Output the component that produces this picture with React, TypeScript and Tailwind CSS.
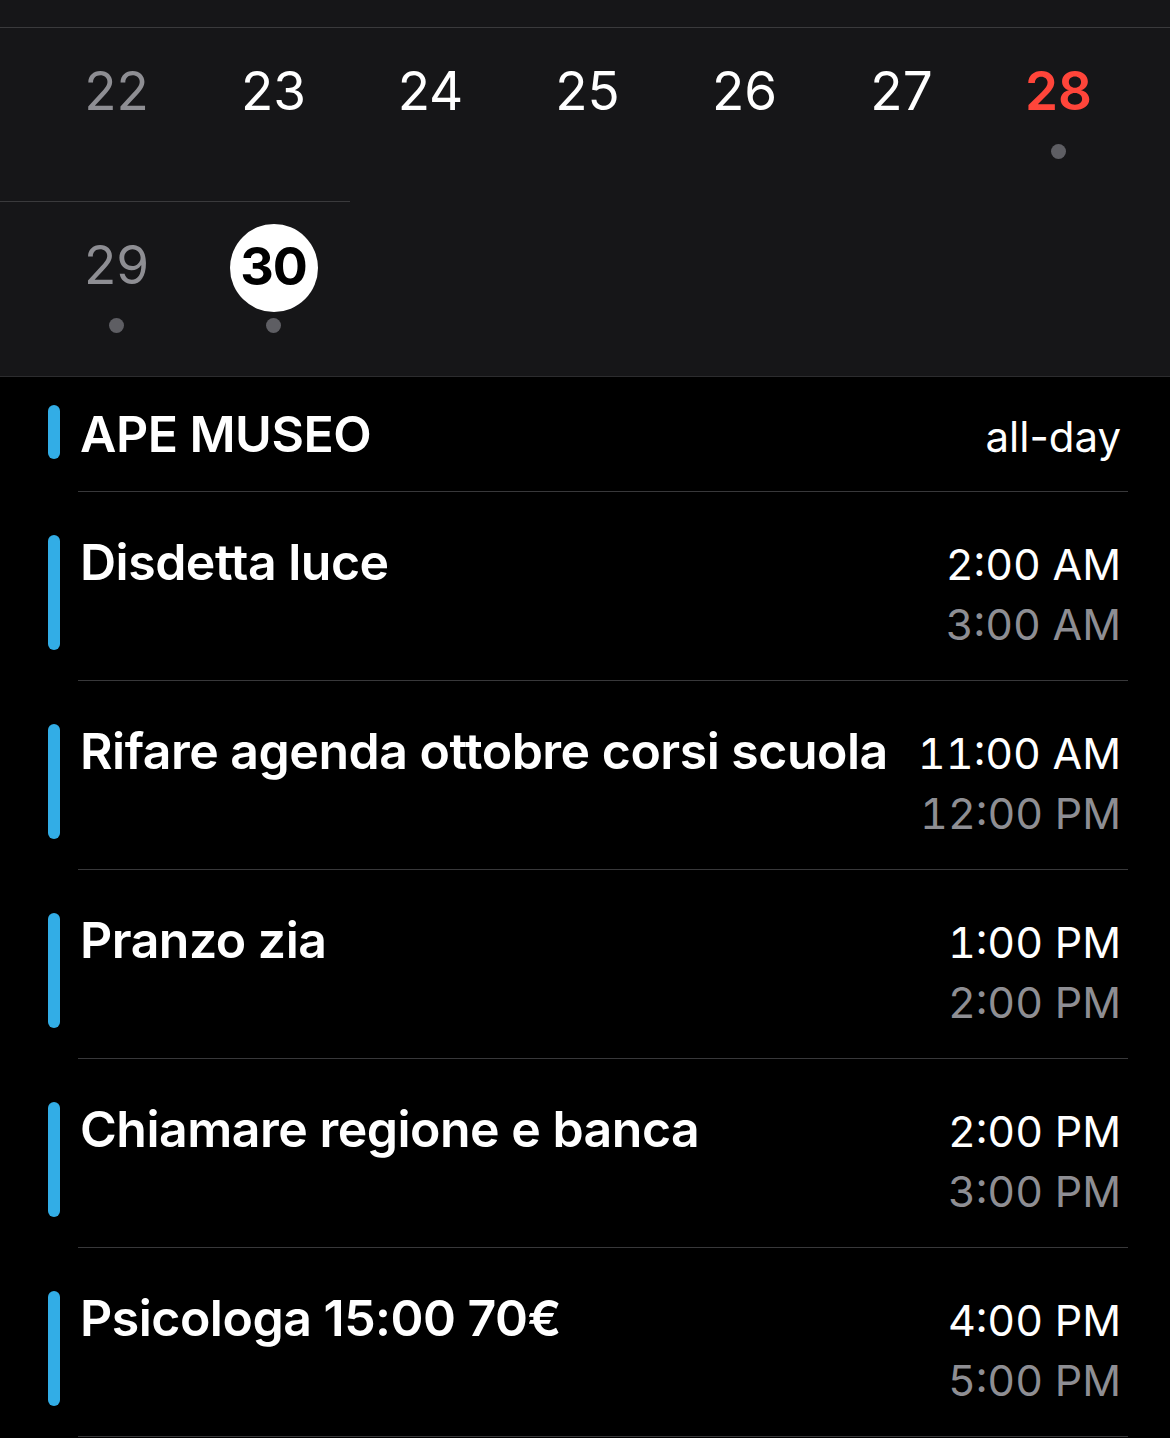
import React from "react";

const font = { fontFamily: "Inter, 'Noto Sans', sans-serif" };

type Day = { n: string; kind: "gray" | "white" | "red" | "today"; dot?: boolean };

const row1: Day[] = [
  { n: "22", kind: "gray" },
  { n: "23", kind: "white" },
  { n: "24", kind: "white" },
  { n: "25", kind: "white" },
  { n: "26", kind: "white" },
  { n: "27", kind: "white" },
  { n: "28", kind: "red", dot: true },
];
const row2: Day[] = [
  { n: "29", kind: "gray", dot: true },
  { n: "30", kind: "today", dot: true },
];

function DayCell({ d }: { d: Day }) {
  return (
    <div className="flex flex-col items-center">
      <div className="mt-[19px] h-[88px] w-[88px] flex items-center justify-center">
        {d.kind === "today" ? (
          <div className="mt-[6px] h-[88px] w-[88px] shrink-0 rounded-full bg-white flex items-center justify-center text-black font-bold text-[52px] leading-none tracking-[-1px]">
            <span className="-mt-[3px]">{d.n}</span>
          </div>
        ) : (
          <span
            className={
              "text-[53px] leading-none " +
              (d.kind === "gray"
                ? "text-[#8e8e93] font-normal"
                : d.kind === "red"
                ? "text-[#ff453a] font-semibold"
                : "text-white font-normal")
            }
          >
            {d.n}
          </span>
        )}
      </div>
      <div
        className={
          "mt-[9px] h-[15px] w-[15px] rounded-full " + (d.dot ? "bg-[#5e5e63]" : "bg-transparent")
        }
      />
    </div>
  );
}

const events = [
  { title: "Disdetta luce", start: "2:00 AM", end: "3:00 AM" },
  { title: "Rifare agenda ottobre corsi scuola", start: "11:00 AM", end: "12:00 PM" },
  { title: "Pranzo zia", start: "1:00 PM", end: "2:00 PM" },
  { title: "Chiamare regione e banca", start: "2:00 PM", end: "3:00 PM" },
  { title: "Psicologa 15:00 70€", start: "4:00 PM", end: "5:00 PM" },
];

export default function App() {
  return (
    <div className="w-[1170px] h-[1438px] bg-black overflow-hidden" style={font}>
      {/* Header */}
      <div className="bg-[#161618] border-b border-[#2c2c2e]">
        <div className="h-[28px] border-b border-[#3a3a3c]" />
        <div className="h-[173px] grid grid-cols-7 pl-[38px] pr-[33px]">
          {row1.map((d) => (
            <DayCell key={d.n} d={d} />
          ))}
        </div>
        <div className="h-px w-[350px] bg-[#3a3a3c]" />
        <div className="h-[174px] grid grid-cols-7 pl-[38px] pr-[33px]">
          {row2.map((d) => (
            <DayCell key={d.n} d={d} />
          ))}
        </div>
      </div>

      {/* All-day row */}
      <div className="flex pl-[48px]">
        <div className="w-[12px] rounded-full bg-[#32ade6] mt-[28px] mb-[33px]" />
        <div className="ml-[18px] mr-[42px] flex-1 h-[115px] border-b border-[#38383a] pl-[2px] pr-[7px] pt-[27px] flex items-baseline justify-between">
          <span className="text-white font-semibold text-[50px] leading-[60px] tracking-[-0.5px]">
            APE MUSEO
          </span>
          <span className="text-white font-normal text-[42px] leading-[60px]">all-day</span>
        </div>
      </div>

      {events.map((e) => (
        <div key={e.title} className="flex pl-[48px]">
          <div className="w-[12px] rounded-full bg-[#32ade6] mt-[43px] mb-[31px]" />
          <div className="ml-[18px] mr-[42px] flex-1 h-[189px] border-b border-[#38383a] pl-[2px] pr-[7px] flex justify-between">
            <div className="pt-[40px] text-white font-semibold text-[50px] leading-[60px] tracking-[-0.5px] whitespace-nowrap">
              {e.title}
            </div>
            <div className="pt-[42px] flex flex-col items-end text-[43px] leading-[60px] font-normal tabular-nums whitespace-nowrap">
              <span className="text-white">{e.start}</span>
              <span className="text-[#8e8e93]">{e.end}</span>
            </div>
          </div>
        </div>
      ))}
    </div>
  );
}
